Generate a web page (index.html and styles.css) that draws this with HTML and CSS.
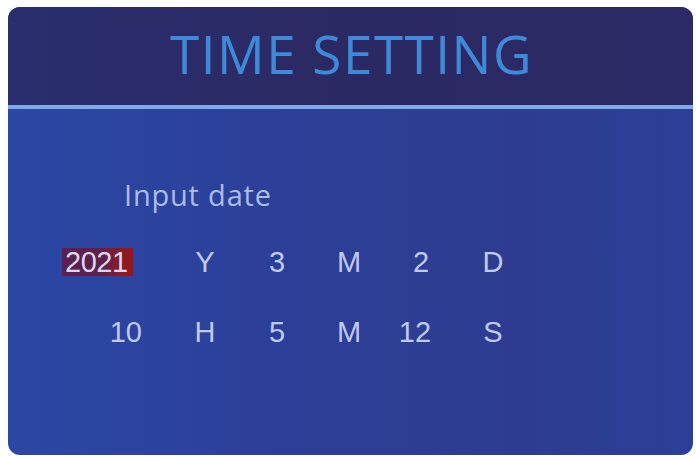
FILE: index.html
```html
<!DOCTYPE html>
<html>
<head>
<meta charset="utf-8">
<link rel="stylesheet" href="styles.css">
</head>
<body>
<div class="screen">
  <div class="header"><h1 class="title">TIME SETTING</h1></div>
  <div class="rule"></div>
  <div class="content">
    <div class="label">Input date</div>
    <div class="grid">
      <div class="cell first"><span class="sel">2021</span></div>
      <div class="cell">Y</div>
      <div class="cell">3</div>
      <div class="cell">M</div>
      <div class="cell">2</div>
      <div class="cell">D</div>
      <div class="cell first-b">10</div>
      <div class="cell">H</div>
      <div class="cell">5</div>
      <div class="cell">M</div>
      <div class="cell shift">12</div>
      <div class="cell">S</div>
    </div>
  </div>
</div>
</body>
</html>
```

FILE: styles.css
```css
html, body {
  margin: 0;
  padding: 0;
  background: #ffffff;
}
body {
  width: 696px;
  height: 460px;
  overflow: hidden;
}
.screen {
  margin: 7px 0 0 8px;
  width: 685px;
  height: 448px;
  border-radius: 12px;
  overflow: hidden;
  display: flex;
  flex-direction: column;
  background: linear-gradient(90deg, #2b47a4 0%, #2c3f98 40%, #2d3c90 75%, #2b3f98 100%);
}
.header {
  height: 98px;
  box-sizing: border-box;
  padding-top: 20px;
  background: linear-gradient(90deg, #2a2e6e 0%, #2b2963 50%, #2b2a66 100%);
  text-align: center;
}
.title {
  margin: 0;
  font-family: "Open Sans", sans-serif;
  font-weight: 400;
  font-size: 53px;
  line-height: 53px;
  letter-spacing: 1.5px;
  color: #3e8ad9;
  padding-left: 2px;
}
.rule {
  height: 4px;
  background: #7eaaea;
}
.content {
  flex: 1;
  padding: 71px 0 0 116px;
}
.label {
  font-family: "Open Sans", sans-serif;
  font-size: 29px;
  line-height: 29px;
  letter-spacing: 0.8px;
  color: #a9bde8;
}
.grid {
  margin-top: 39px;
  margin-left: -62px;
  display: grid;
  grid-template-columns: 107px repeat(5, 72px);
  row-gap: 41px;
  font-family: "Liberation Sans", Arial, sans-serif;
  font-size: 29px;
  line-height: 29px;
  color: #bfcaef;
}
.cell {
  text-align: center;
}
.first {
  text-align: left;
}
.first-b {
  text-align: right;
  padding-right: 27px;
}
.shift {
  padding-right: 12px;
}
.sel {
  display: inline-block;
  padding: 0 5px 0 3px;
  margin-top: -1px;
  line-height: 28px;
  letter-spacing: -0.5px;
  background: linear-gradient(90deg, #5a2052 0%, #632046 60%, #8a1a2a 80%, #9a1616 100%);
  color: #d6d9f2;
}
```
